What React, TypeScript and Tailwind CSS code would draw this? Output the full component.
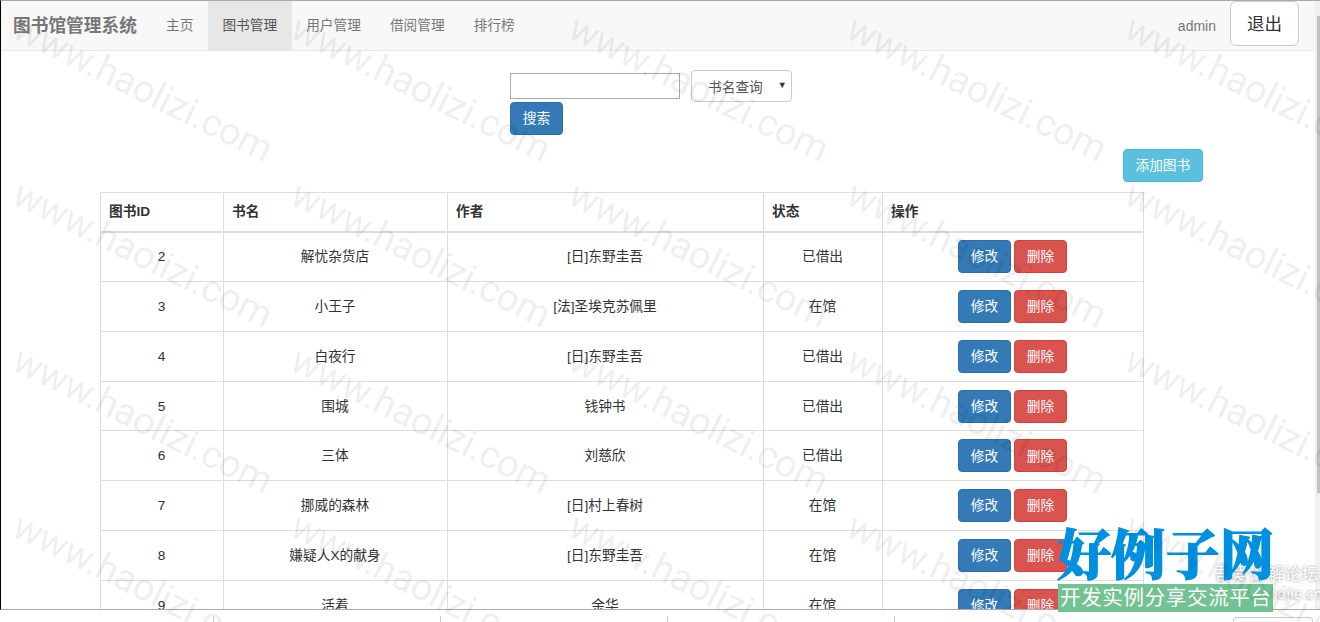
import { Fragment } from "react"

const navItems = ["主页", "图书管理", "用户管理", "借阅管理", "排行榜"]

const books = [
  { id: 2, name: "解忧杂货店", author: "[日]东野圭吾", status: "已借出" },
  { id: 3, name: "小王子", author: "[法]圣埃克苏佩里", status: "在馆" },
  { id: 4, name: "白夜行", author: "[日]东野圭吾", status: "已借出" },
  { id: 5, name: "围城", author: "钱钟书", status: "已借出" },
  { id: 6, name: "三体", author: "刘慈欣", status: "已借出" },
  { id: 7, name: "挪威的森林", author: "[日]村上春树", status: "在馆" },
  { id: 8, name: "嫌疑人X的献身", author: "[日]东野圭吾", status: "在馆" },
  { id: 9, name: "活着", author: "余华", status: "在馆" },
]

const btn = "h-[33px] rounded border px-[11.8px] pt-px leading-none text-white"

const Watermark = () => (
  <svg className="pointer-events-none absolute inset-0" width="1320" height="622">
    {[0, 1, 2, 3].map((row) => (
      <Fragment key={row}>
        {[0, 1, 2, 3, 4].map((col) => (
          <text
            key={col}
            transform={`translate(${10 + col * 278} ${37 + row * 166}) rotate(26.3)`}
            textLength="284"
            fontSize="38"
            fontFamily="Roboto, sans-serif"
            fill="#000"
            fillOpacity="0.08"
          >
            www.haolizi.com
          </text>
        ))}
      </Fragment>
    ))}
  </svg>
)

const Navbar = () => (
  <nav className="flex h-[50px] w-[1314px] items-center rounded-br border-b border-[#e7e7e7] bg-[#f8f8f8] text-[#777]">
    <span className="w-[151px] pl-[12px] text-[17.7px] font-bold">图书馆管理系统</span>
    <ul className="flex h-full">
      {navItems.map((item) => (
        <li
          key={item}
          className={`flex h-[49px] items-center pr-[15px] pl-[14px] ${item === "图书管理" ? "bg-[#e7e7e7] text-[#555]" : ""}`}
        >
          {item}
        </li>
      ))}
    </ul>
    <span className="ml-auto text-[14px]">admin</span>
    <button className="mr-[16px] ml-[14px] h-[45px] w-[69px] self-start rounded-md border border-[#ccc] bg-white text-[17.5px] text-[#333]">
      退出
    </button>
  </nav>
)

const BookTable = () => (
  <table className="ml-[99px] w-[1043px] table-fixed border-collapse text-center text-[#333] [&_td]:border [&_td]:border-[#ddd] [&_th]:border [&_th]:border-[#ddd]">
    <colgroup>
      <col className="w-[123px]" />
      <col className="w-[224px]" />
      <col className="w-[316px]" />
      <col className="w-[119px]" />
      <col className="w-[261px]" />
    </colgroup>
    <thead>
      <tr className="h-[39px] text-left">
        {["图书ID", "书名", "作者", "状态", "操作"].map((h) => (
          <th key={h} className="border-b-2! px-[8px] pt-px font-bold">{h}</th>
        ))}
      </tr>
    </thead>
    <tbody>
      {books.map((book) => (
        <tr key={book.id} className="h-[49.86px]">
          <td className="pt-px pr-px">{book.id}</td>
          <td className="pt-px pr-px">{book.name}</td>
          <td className="pt-px pr-px">{book.author}</td>
          <td className="pt-px pr-px">{book.status}</td>
          <td>
            <div className="flex justify-center gap-[3px] pr-px">
              <button className={`${btn} border-[#2e6da4] bg-[#337ab7]`}>修改</button>
              <button className={`${btn} border-[#d43f3a] bg-[#d9534f]`}>删除</button>
            </div>
          </td>
        </tr>
      ))}
    </tbody>
  </table>
)

export default function App() {
  return (
    <div className="relative h-[622px] w-[1320px] overflow-hidden bg-white font-['Liberation_Sans','Noto_Sans_CJK_SC',sans-serif] text-[13.7px] leading-[20px]">
      <div className="flex h-[610px] overflow-hidden border-t border-b border-l border-t-[#aaa] border-b-[#aaa] border-l-black">
        <main className="w-[1314px] shrink-0">
          <Navbar />
          <div className="ml-[509px] flex w-[290px] flex-wrap pt-[19px]">
            <input className="mt-[3px] h-[26px] w-[170px] border border-[#aaa]" />
            <div className="ml-[11px] flex h-[32px] w-[101px] items-center rounded border border-[#ccc] pt-[4px] pl-[16px] text-[#555]">
              书名查询
              <span className="-mt-[7px] ml-[15px] text-[9px] text-[#333]">▼</span>
            </div>
            <button className={`${btn} border-[#2e6da4] bg-[#337ab7]`}>搜索</button>
          </div>
          <div className="mr-[112px] mb-[10px] flex justify-end pt-[14px]">
            <button className={`${btn} border-[#46b8da] bg-[#5bc0de]`}>添加图书</button>
          </div>
          <BookTable />
        </main>
        <div className="flex w-[5px] flex-col bg-[#f1f1f1] pt-[15px]">
          <div className="ml-[2px] h-[477px] bg-[#c1c1c1]" />
        </div>
      </div>
      <div className="flex h-[12px] items-end">
        {[0, 1, 2, 3].map((n) => (
          <div key={n} className={`h-[6px] border-r border-[#ccc] ${n === 0 ? "w-[214px]" : "w-[227px]"}`} />
        ))}
        <div className="ml-[338px] h-[5px] w-[80px] rounded-t border border-b-0 border-[#ccc]" />
      </div>

      <div className="absolute top-[563px] left-[1214px] w-[108px] font-['Noto_Sans_CJK_SC',sans-serif] text-[17.5px] leading-[20px] whitespace-nowrap text-white [text-shadow:0_0_3px_#888]">
        <p>吾爱破解论坛</p>
        <p className="text-right text-[14.5px]">www.52pojie.cn</p>
      </div>
      <svg className="absolute top-[524px] left-[1056px]" width="222" height="88">
        <text
          x="1"
          y="51"
          textLength="217"
          fontSize="54"
          fontWeight="900"
          fontFamily="'Noto Serif CJK SC', 'Noto Sans CJK SC', serif"
          fill="#0090e0"
          stroke="#0090e0"
          strokeWidth="1.2"
        >
          好例子网
        </text>
        <rect x="2" y="60" width="215" height="28" fill="#72c293" />
        <text x="4" y="81" textLength="211" fontSize="20.5" fontFamily="'Noto Sans CJK SC', sans-serif" fill="#fff">
          开发实例分享交流平台
        </text>
      </svg>

      <Watermark />
    </div>
  )
}
